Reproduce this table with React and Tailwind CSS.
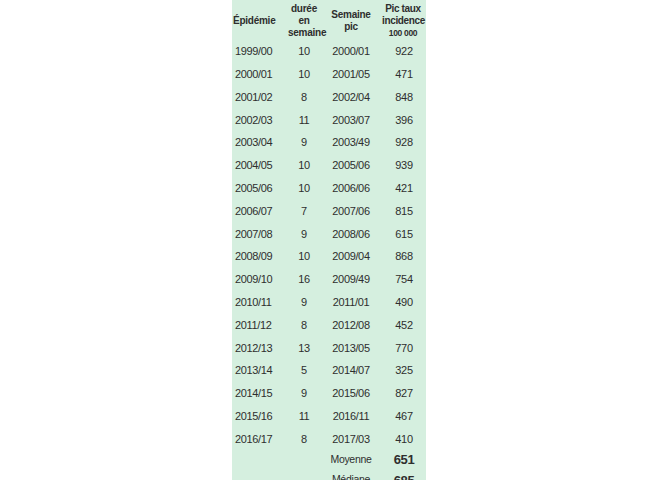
import React from 'react';

const rows = [
  ['1999/00', '10', '2000/01', '922'],
  ['2000/01', '10', '2001/05', '471'],
  ['2001/02', '8', '2002/04', '848'],
  ['2002/03', '11', '2003/07', '396'],
  ['2003/04', '9', '2003/49', '928'],
  ['2004/05', '10', '2005/06', '939'],
  ['2005/06', '10', '2006/06', '421'],
  ['2006/07', '7', '2007/06', '815'],
  ['2007/08', '9', '2008/06', '615'],
  ['2008/09', '10', '2009/04', '868'],
  ['2009/10', '16', '2009/49', '754'],
  ['2010/11', '9', '2011/01', '490'],
  ['2011/12', '8', '2012/08', '452'],
  ['2012/13', '13', '2013/05', '770'],
  ['2013/14', '5', '2014/07', '325'],
  ['2014/15', '9', '2015/06', '827'],
  ['2015/16', '11', '2016/11', '467'],
  ['2016/17', '8', '2017/03', '410'],
];

const cols = 'grid grid-cols-[56px_32px_62px_45px]';

export default function App() {
  return (
    <div className="h-[496px] w-[661px] bg-white" style={{ fontFamily: '"Liberation Sans", Arial, sans-serif' }}>
      <div className="ml-[232px] h-[480px] w-[194px] overflow-hidden bg-[#d5efdf] text-[#2e2e2e]">
        <div className={`${cols} h-[40px] items-center pt-[1px] text-[10px] font-bold leading-[12px] tracking-[-0.25px]`}>
          <div className="pl-[1px]">Épidémie</div>
          <div className="text-center">
            durée
            <br />
            en
            <br />
            semaine
          </div>
          <div className="text-center">
            Semaine
            <br />
            pic
          </div>
          <div className="whitespace-nowrap pr-[3px] text-center tracking-[-0.35px]">
            Pic taux
            <br />
            incidence
            <br />
            <span className="text-[8.5px]">100 000</span>
          </div>
        </div>

        {rows.map((r) => (
          <div key={r[0]} className={`${cols} h-[22.8px] items-center text-[11px] tracking-[-0.35px]`}>
            <div className="pl-[3px]">{r[0]}</div>
            <div className="text-center">{r[1]}</div>
            <div className="text-center">{r[2]}</div>
            <div className="pr-[1px] text-center">{r[3]}</div>
          </div>
        ))}

        <div className={`${cols} h-[12px] items-center`}>
          <div />
          <div />
          <div className="text-center text-[10.5px] tracking-[-0.3px]">Moyenne</div>
          <div className="pr-[1px] text-center text-[13px] font-bold tracking-[-0.4px]">651</div>
        </div>
        <div className={`${cols} mt-[6px] h-[14px] items-center`}>
          <div />
          <div />
          <div className="text-center text-[10.5px] tracking-[-0.3px]">Médiane</div>
          <div className="pr-[1px] pt-[3px] text-center text-[13px] font-bold tracking-[-0.4px]">685</div>
        </div>
      </div>
    </div>
  );
}
